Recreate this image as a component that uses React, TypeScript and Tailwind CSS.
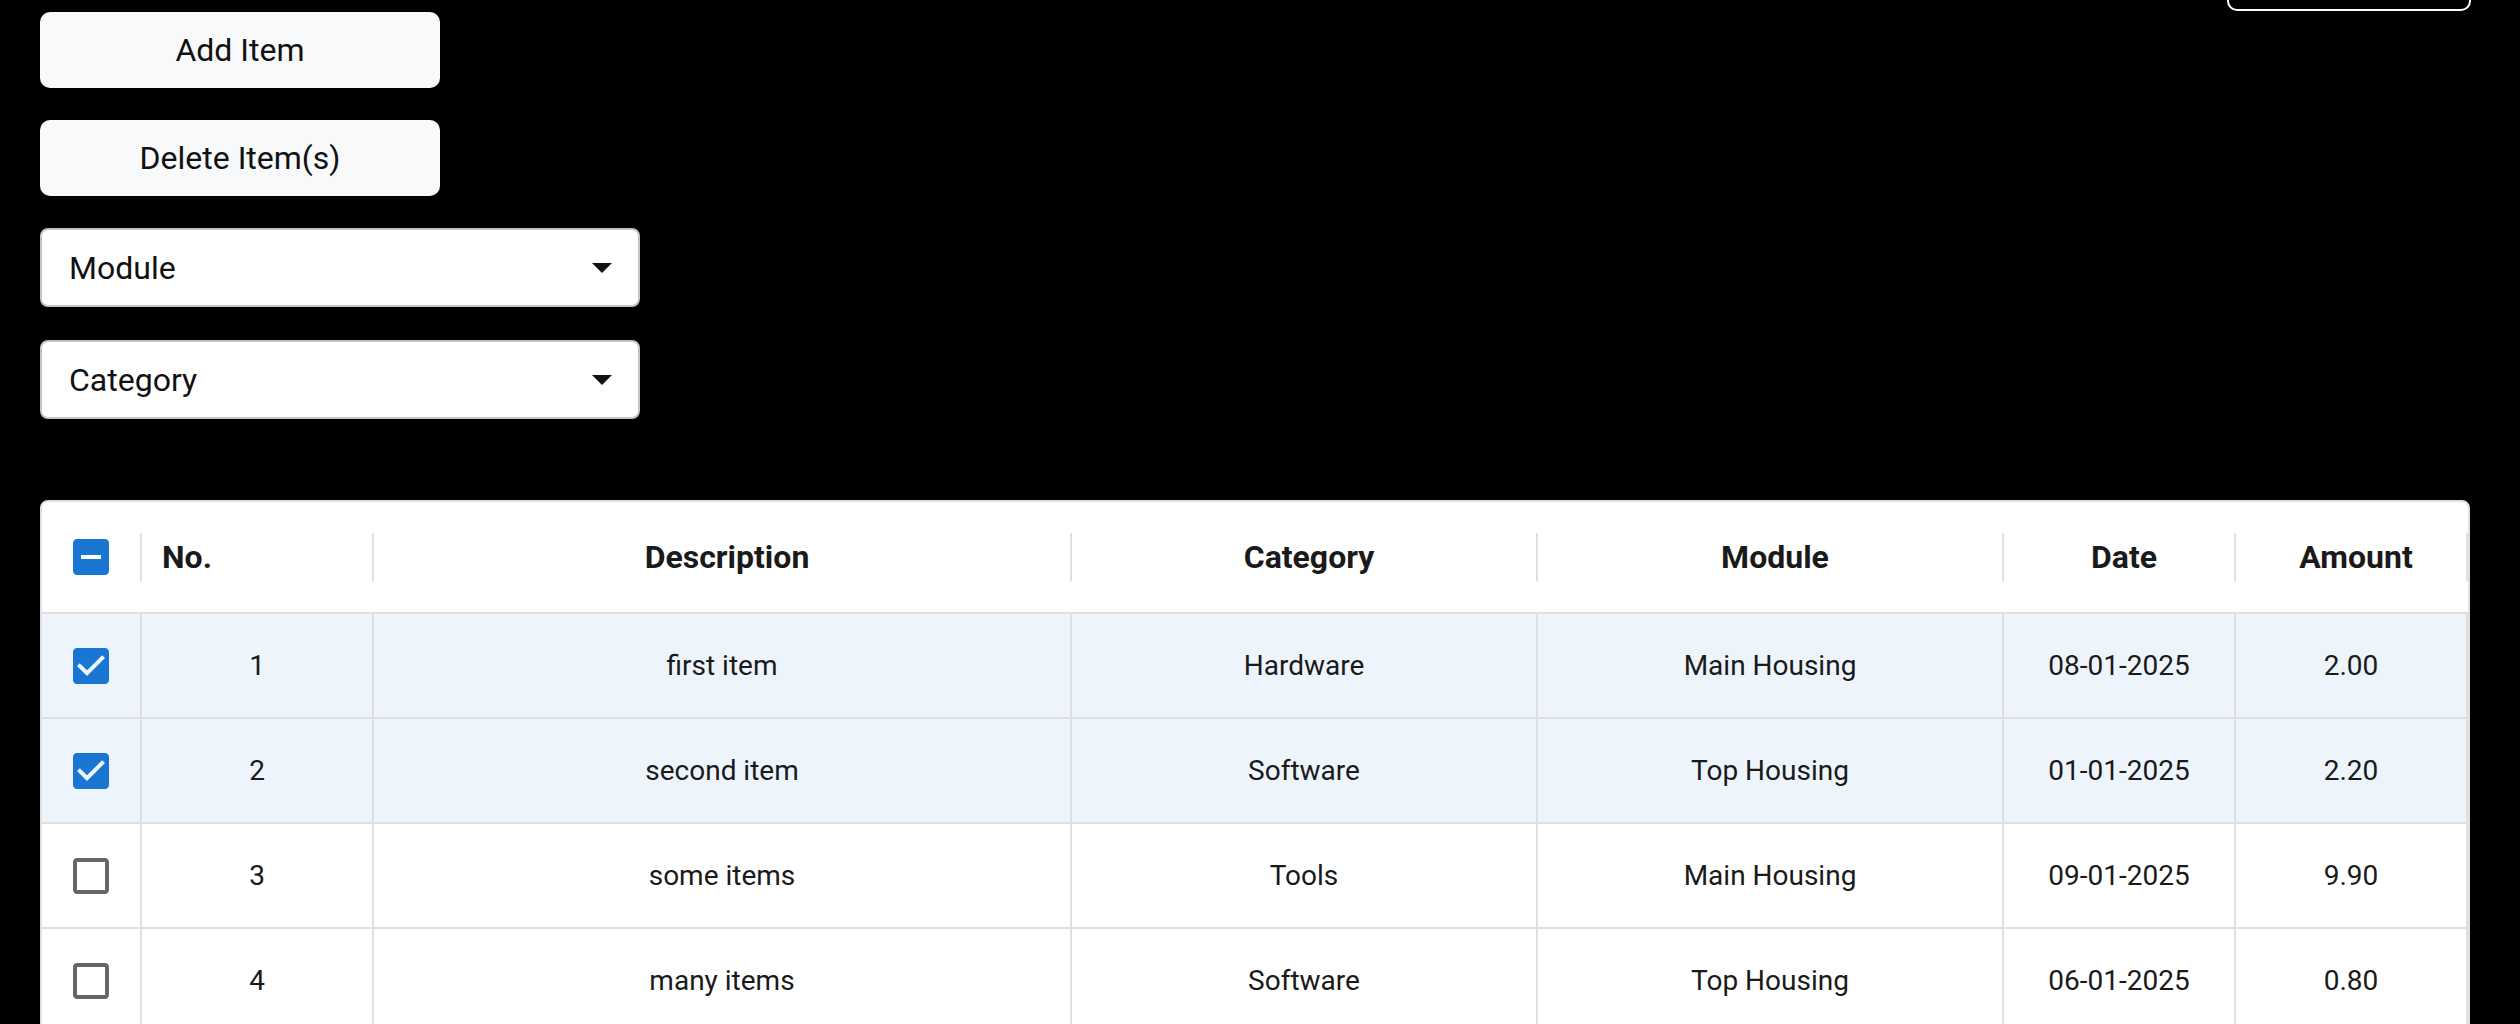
import React from "react";

type Row = { no: number; desc: string; cat: string; mod: string; date: string; amt: string; sel: boolean };

const rows: Row[] = [
  { no: 1, desc: "first item", cat: "Hardware", mod: "Main Housing", date: "08-01-2025", amt: "2.00", sel: true },
  { no: 2, desc: "second item", cat: "Software", mod: "Top Housing", date: "01-01-2025", amt: "2.20", sel: true },
  { no: 3, desc: "some items", cat: "Tools", mod: "Main Housing", date: "09-01-2025", amt: "9.90", sel: false },
  { no: 4, desc: "many items", cat: "Software", mod: "Top Housing", date: "06-01-2025", amt: "0.80", sel: false },
];

function Box({ kind }: { kind: "checked" | "indeterminate" | "empty" }) {
  if (kind === "checked")
    return (
      <svg width="48" height="48" viewBox="0 0 24 24" className="shrink-0">
        <path fill="#1976d2" d="M19 3H5c-1.11 0-2 .9-2 2v14c0 1.1.89 2 2 2h14c1.11 0 2-.9 2-2V5c0-1.1-.89-2-2-2zm-9 14l-5-5 1.41-1.41L10 14.17l7.59-7.59L19 8l-9 9z" />
      </svg>
    );
  if (kind === "indeterminate")
    return (
      <svg width="48" height="48" viewBox="0 0 24 24" className="shrink-0">
        <path fill="#1976d2" d="M19 3H5c-1.1 0-2 .9-2 2v14c0 1.1.9 2 2 2h14c1.1 0 2-.9 2-2V5c0-1.1-.9-2-2-2zm-2 10H7v-2h10v2z" />
      </svg>
    );
  return (
    <svg width="48" height="48" viewBox="0 0 24 24" className="shrink-0">
      <path fill="#666666" d="M19 5v14H5V5h14m0-2H5c-1.1 0-2 .9-2 2v14c0 1.1.9 2 2 2h14c1.1 0 2-.9 2-2V5c0-1.1-.9-2-2-2z" />
    </svg>
  );
}

function Select({ label }: { label: string }) {
  return (
    <div className="w-[600px] h-[79px] bg-white border-2 border-[#c4c4c4] rounded-[8px] flex items-center justify-between pl-[27px] pr-[26px]">
      <span className="text-[32px] text-[#111]">{label}</span>
      <svg width="20" height="10" viewBox="0 0 20 10">
        <path d="M0 0h20L10 10z" fill="#111" />
      </svg>
    </div>
  );
}

function HeaderCell({ children, align = "center" }: { children?: React.ReactNode; align?: "center" | "left" | "box" }) {
  const inner =
    align === "left" ? "justify-start pl-[20px]" : align === "box" ? "justify-center" : "justify-center pl-[10px]";
  return (
    <div className="flex items-center h-full">
      <div className={`flex-1 flex items-center h-full ${inner}`}>{children}</div>
      <div className="w-[2px] h-[48px] bg-[#e0e0e0]" />
    </div>
  );
}

const gridCols = "grid grid-cols-[100px_232px_698px_466px_466px_232px_232px]";

export default function App() {
  return (
    <div className="min-h-screen bg-black font-['Roboto',sans-serif] text-[#1a1a1a]">
      <div className="flex justify-between pl-[40px] pr-[49px]">
        <div className="flex flex-col pt-[12px] gap-[32px]">
          <button className="w-[400px] h-[76px] bg-[#f8f9fb] rounded-[10px] text-[32px] text-[#111]">Add Item</button>
          <button className="w-[400px] h-[76px] bg-[#f8f9fb] rounded-[10px] text-[32px] text-[#111]">Delete Item(s)</button>
          <div className="flex flex-col gap-[33px]">
            <Select label="Module" />
            <Select label="Category" />
          </div>
        </div>
        <div className="w-[244px] h-[71px] -mt-[60px] border-2 border-white rounded-[10px]" />
      </div>

      <div className="ml-[40px] mt-[81px] w-[2430px] bg-white border-2 border-[#e0e0e0] rounded-[8px] overflow-hidden">
        <div className={`${gridCols} h-[112px] border-b-2 border-[#e0e0e0] text-[32px] font-bold text-[#1a1a1a]`}>
          <HeaderCell align="box">
            <Box kind="indeterminate" />
          </HeaderCell>
          <HeaderCell align="left">No.</HeaderCell>
          <HeaderCell>Description</HeaderCell>
          <HeaderCell>Category</HeaderCell>
          <HeaderCell>Module</HeaderCell>
          <HeaderCell>Date</HeaderCell>
          <HeaderCell>Amount</HeaderCell>
        </div>
        {rows.map((r) => {
          const cell = "flex items-center justify-center h-[105px] border-r-2 border-b-2 border-[#e0e0e0]";
          return (
            <div key={r.no} className={`${gridCols} text-[28px] text-[#1a1a1a] ${r.sel ? "bg-[#edf4fb]" : "bg-white"}`}>
              <div className={cell}>
                <Box kind={r.sel ? "checked" : "empty"} />
              </div>
              <div className={cell}>{r.no}</div>
              <div className={cell}>{r.desc}</div>
              <div className={cell}>{r.cat}</div>
              <div className={cell}>{r.mod}</div>
              <div className={cell}>{r.date}</div>
              <div className={cell}>{r.amt}</div>
            </div>
          );
        })}
      </div>
    </div>
  );
}
